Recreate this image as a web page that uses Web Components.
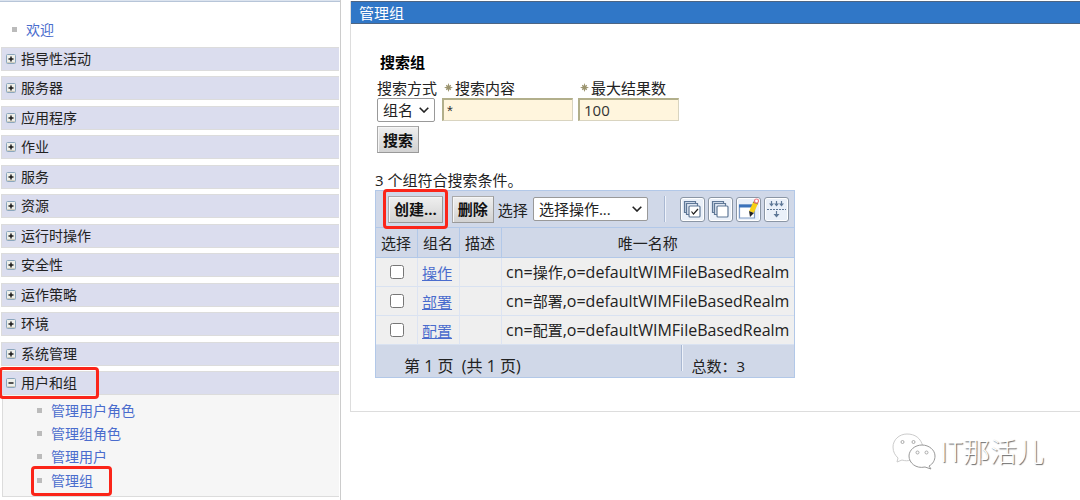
<!DOCTYPE html>
<html lang="zh-CN">
<head>
<meta charset="utf-8">
<title>管理组</title>
<style>
html,body{margin:0;background:#fff}
body{font-family:"Open Sans","Noto Sans CJK SC",sans-serif;font-size:15px;color:#222}
</style>
</head>
<body>
<console-app></console-app>
<script>
const define = (name, html, setup) => {
  const tpl = document.createElement('template');
  tpl.innerHTML = html;
  customElements.define(name, class extends HTMLElement {
    constructor() {
      super();
      this.attachShadow({mode: 'open'}).append(tpl.content.cloneNode(true));
    }
    connectedCallback() { if (setup) setup(this, this.shadowRoot); }
  });
};

/* Red highlight round whatever is slotted */
define('red-frame', `<style>
:host{display:inline-block;position:relative}
:host::after{content:"";position:absolute;inset:var(--frame-inset,-6px);border:3px solid #fb2519;border-radius:4px;pointer-events:none;z-index:2}
</style><slot></slot>`);

define('nav-link', `<style>
:host{display:flex;align-items:center;height:23px;font-size:14px;line-height:23px}
i{width:5px;height:5px;background:#bbb;margin-right:9px}
a{color:#4a6ccd;text-decoration:none}
</style><i></i><a href="#"><slot></slot></a>`);

define('nav-group', `<style>
:host{display:block;font-size:14px}
button{display:flex;align-items:center;width:100%;height:24px;box-sizing:border-box;margin:0;padding:0 0 0 4px;
 border:0 solid #dcdcdc;border-width:1px 0 1px 1px;background:#dbddee;color:#222;font:inherit;line-height:22px;text-align:left}
svg{width:10px;height:10px;margin-right:5px;flex:none}
:host([open]) .v{display:none}
.items{display:none;padding:4px 0 4px 34px;background:#f6f6f6;border:1px solid #dcdcdc;border-width:0 0 1px 1px;margin-left:1px}
:host([open]) .items{display:block}
</style>
<button type="button"><svg viewBox="0 0 10 10"><rect x=".5" y=".5" width="9" height="9" rx="1" fill="#eeefea" stroke="#8ba6bd"/><path d="M1 8.5h8" stroke="#cfcdbf"/><path d="M2.500 5h5" stroke="#111" stroke-width="1.4"/><path class="v" d="M5 2.500v5" stroke="#111" stroke-width="1.4"/></svg><slot name="title"></slot></button>
<div class="items"><slot></slot></div>`, (host, root) => {
  root.querySelector('button').onclick = () => host.toggleAttribute('open');
});

define('console-nav', `<style>
:host{display:flex;flex-direction:column;box-sizing:border-box;min-height:100vh;border-right:1px solid #ccc;padding:0 1px 3px 1px}
.top{height:2px;box-sizing:border-box;background:#dce4ef;border-bottom:1px solid #b7c5d8;margin:0 -1px}
.welcome{padding:16px 0 6px 11px}
.groups{flex:1;display:flex;flex-direction:column;justify-content:space-between;gap:5px}
.user{--frame-inset:-5px -22px -5px -22px}
.current{--frame-inset:-3px -19px -4px -6px}
</style>
<div class="top"></div>
<div class="welcome"><nav-link>欢迎</nav-link></div>
<div class="groups">
<nav-group><span slot="title">指导性活动</span></nav-group>
<nav-group><span slot="title">服务器</span></nav-group>
<nav-group><span slot="title">应用程序</span></nav-group>
<nav-group><span slot="title">作业</span></nav-group>
<nav-group><span slot="title">服务</span></nav-group>
<nav-group><span slot="title">资源</span></nav-group>
<nav-group><span slot="title">运行时操作</span></nav-group>
<nav-group><span slot="title">安全性</span></nav-group>
<nav-group><span slot="title">运作策略</span></nav-group>
<nav-group><span slot="title">环境</span></nav-group>
<nav-group><span slot="title">系统管理</span></nav-group>
<nav-group open><red-frame class="user" slot="title">用户和组</red-frame>
<nav-link>管理用户角色</nav-link><nav-link>管理组角色</nav-link><nav-link>管理用户</nav-link><red-frame class="current"><nav-link>管理组</nav-link></red-frame>
</nav-group>
</div>`);

define('push-button', `<style>
:host{display:inline-block}
button{height:27px;box-sizing:border-box;padding:0 5px;margin:0;border:1px solid #aaa;border-bottom-color:#999;border-right-color:#999;
 background:linear-gradient(#efefef,#d2d2d2);box-shadow:inset 1px 1px #f6f6f6;font:bold 15px/24px "Open Sans","Noto Sans CJK SC",sans-serif;color:#111;display:block;white-space:nowrap}
</style><button type="button"><slot></slot></button>`);

const selectCss = `
.select{display:inline-grid;align-items:center}
.select>*{grid-area:1/1}
.select svg{justify-self:end;width:10px;height:6px;margin-right:6px;pointer-events:none;fill:none;stroke:#222;stroke-width:1.6}
select{appearance:none;width:100%;height:24px;box-sizing:border-box;margin:0;padding:0 20px 0 5px;border:1px solid #999;border-radius:2px;background:#fff;color:#222;font:inherit;line-height:20px}`;
const chevron = `<svg viewBox="0 0 10 6"><path d="M.7.7 5 5 9.3.7"/></svg>`;
const required = `<svg viewBox="0 0 8 8"><path d="M4 0 5 3 8 4 5 5 4 8 3 5 0 4 3 3z" fill="#9b946f"/><path d="M2 2l4 4M6 2l-4 4" stroke="#9b946f" stroke-width="1"/></svg>`;

define('search-form', `<style>
:host{display:block}
${selectCss}
h2{margin:0;padding-left:3px;font-size:15px;line-height:22px;color:#000}
.fields{display:flex;align-items:flex-start;margin-top:5px;gap:4px}
.fields>div{display:flex;flex-direction:column}
label{height:20px;line-height:22px;white-space:nowrap;display:flex;align-items:center}
label svg{width:9px;height:9px;margin:0 2px 1px 2px}
.how{width:61px}.how .select{width:58px}
input{box-sizing:border-box;height:23px;width:131px;margin:0;padding:0 4px;border:1px solid #d9d4c0;border-top:2px solid #b2af8b;border-left:2px solid #b2af8b;background:#fff5dd;color:#333;font:inherit}
#what{font-family:"Liberation Sans",sans-serif;padding-left:3px}
.max{margin-left:1px}
.max input{width:101px}
push-button{margin-top:4px}
</style>
<h2>搜索组</h2>
<div class="fields">
<div class="how"><label for="how">搜索方式</label><span class="select"><select id="how"><option>组名</option></select>${chevron}</span></div>
<div><label for="what">${required}搜索内容</label><input id="what" value="*"></div>
<div class="max"><label for="max">${required}最大结果数</label><input id="max" value="100"></div>
</div>
<push-button>搜索</push-button>`);

const glyphs = {
  all: ['全选', '<path d="M4.500 4.500h11v11h-11z" fill="#cbd7e8"/><path d="M6.500 6.500h11v11h-11z" fill="#dde5f1"/><rect x="9" y="9" width="11" height="11" rx="1" fill="#fff"/><path d="M11.500 14.500l2 2.500 4.500-5" stroke="#222"/>'],
  none: ['取消全选', '<path d="M4.500 4.500h11v11h-11z" fill="#cbd7e8"/><path d="M6.500 6.500h11v11h-11z" fill="#dde5f1"/><rect x="9" y="9" width="11" height="11" rx="1" fill="#fff"/>'],
  edit: ['显示过滤器', '<path d="M3.500 8h15v13h-15z" fill="#fff" stroke="#7e9bc5"/><path d="M3 9h15" stroke="#3b72bb" stroke-width="3"/><path d="M19.500 6l-4 9" stroke="#f7cf16" stroke-width="5"/><path d="M17 5l5 2" stroke="#8d7c32"/><circle cx="20.500" cy="4" r="2" fill="#fff" stroke="#f1757c"/><path d="M13 14l5 2-4 4z" fill="#222" stroke="none"/>'],
  filter: ['隐藏过滤器', '<path d="M3 12.500h19" stroke-dasharray="2 1"/><path d="M7.500 4v4M12.500 4v4M17.500 4v4M12.500 14v5"/><path d="M5 6.500h5l-2.500 3zM10 6.500h5l-2.500 3zM15 6.500h5l-2.500 3zM9.500 17h6l-3 3.500z" fill="#5f7897" stroke="none"/>']
};
define('tool-icon', `<style>
:host{display:block}
button{display:block;width:25px;height:25px;box-sizing:border-box;margin:0;padding:0;border:1px solid #8b96a5;border-radius:3px;background:#eaf0f9;box-shadow:inset 0 0 0 1px #fff}
svg{display:block;width:25px;height:25px;margin:-1px;fill:none;stroke:#5f7897;stroke-width:1.2}
</style><button type="button"><svg viewBox="0 0 25 25"></svg></button>`, (host, root) => {
  const [name, art] = glyphs[host.getAttribute('kind')];
  root.querySelector('button').setAttribute('aria-label', name);
  root.querySelector('svg').innerHTML = art;
});

define('group-table', `<style>
:host{display:block;width:fit-content;border:1px solid #b2c8e8;background:#d0d8e8}
${selectCss}
.bar{display:flex;align-items:center;height:36px;padding:0 5px 0 12px}
.bar label{margin:0 5px 0 4px}
red-frame{margin-right:9px;--frame-inset:-7px -5px -6px -5px}
.select{width:115px}
.sep{width:1px;height:26px;background:#a9b8d2;border-right:1px solid #eef2fa;margin:0 13px 0 16px}
.icons{display:flex;gap:3px;margin-left:auto}
table{border-collapse:separate;border-spacing:0;width:100%}
th,td{box-sizing:border-box;padding:0 4px;border-right:1px solid #dde4f2;white-space:nowrap;text-align:left}
th{height:31px;font-weight:normal;border-top:1px solid #b2c8e8;border-right-color:#b2c8e8;border-bottom:1px solid #b2c8e8;text-align:center;padding:0 6px 0 5px}
td{height:29px;background:#efefef;border-bottom:1px solid #d9e2f1}
th:last-child,td:last-child{border-right:0}
td:last-child{padding-right:5px;font-size:16px;line-height:20px}
td span{font-size:15px}
input{display:block;width:14px;height:14px;margin:0 auto}
a{color:#4a6ccd}
.foot{display:flex;height:32px}
.page{flex:1;padding-left:28px;font-size:16px;line-height:42px}
.total{width:111px;box-sizing:border-box;padding-left:8px;line-height:42px}
.foot i{width:1px;height:26px;background:#a9b8d2;border-right:1px solid #eef2fa}
</style>
<div class="bar"><red-frame><push-button>创建...</push-button></red-frame><push-button>删除</push-button>
<label for="act">选择</label><span class="select"><select id="act"><option>选择操作...</option></select>${chevron}</span>
<span class="sep"></span><div class="icons"><tool-icon kind="all"></tool-icon><tool-icon kind="none"></tool-icon><tool-icon kind="edit"></tool-icon><tool-icon kind="filter"></tool-icon></div></div>
<table><thead><tr><th>选择</th><th>组名</th><th>描述</th><th>唯一名称</th></tr></thead><tbody></tbody></table>
<div class="foot"><span class="page">第 1 页&nbsp; (共 1 页)</span><i></i><span class="total">总数：3</span></div>`, (host, root) => {
  root.querySelector('tbody').innerHTML = ['操作', '部署', '配置'].map(n =>
    `<tr><td><input type="checkbox" aria-label="${n}"></td><td><a href="#">${n}</a></td><td></td><td>cn=<span>${n}</span>,o=defaultWIMFileBasedRealm</td></tr>`).join('');
});

define('title-panel', `<style>
:host{display:block;border-left:1px solid #ddd;border-bottom:1px solid #ddd}
h1{margin:0;height:23px;box-sizing:border-box;padding-left:8px;background:#3077c7;border:solid #4d6583;border-width:1px 0;font-size:15px;font-weight:normal;line-height:22px;color:#fff}
.body{padding:27px 24px 33px}
</style><h1><slot name="title"></slot></h1><div class="body"><slot></slot></div>`);

define('wechat-mark', `<style>
:host{display:flex;align-items:center;justify-content:flex-end;gap:4px;font-family:"Noto Sans CJK SC",sans-serif;font-weight:300;font-size:27px;line-height:34px;color:#fff;text-shadow:1px 1px 1px #666}
svg{width:44px;height:38px;fill:#fff;stroke:#aaa;stroke-width:1}
</style>
<svg viewBox="0 0 44 38"><path d="M6 26l-1 4 5-2c3 1 6 1 9 0 10-1 13-8 12-13C29 6 23 2 15 2 7 2 1 8 1 15c0 5 2 8 5 11z" stroke="#ccc"/><circle cx="10.500" cy="10" r="1.500"/><circle cx="21.500" cy="10" r="1.500"/><path d="M37 34l2 3-6-2c-9 2-16-4-16-11 0-6 6-11 13-11s13 5 13 11c0 4-2 8-6 10z" stroke="#999"/><circle cx="25.500" cy="20.500" r="1.500"/><circle cx="34.500" cy="20.500" r="1.500"/></svg>
<span>IT那活儿</span>`);

define('console-app', `<style>
:host{display:grid;grid-template-columns:341px 1fr;column-gap:9px}
main{padding-top:1px}
search-form{margin-left:2px}
p{margin:17px 0 0;line-height:20px}
wechat-mark{margin:20px 36px 0 0}
</style>
<console-nav></console-nav>
<main><title-panel><span slot="title">管理组</span><search-form></search-form><p>3 个组符合搜索条件。</p><group-table></group-table></title-panel>
<wechat-mark></wechat-mark></main>`);
</script>
</body>
</html>
